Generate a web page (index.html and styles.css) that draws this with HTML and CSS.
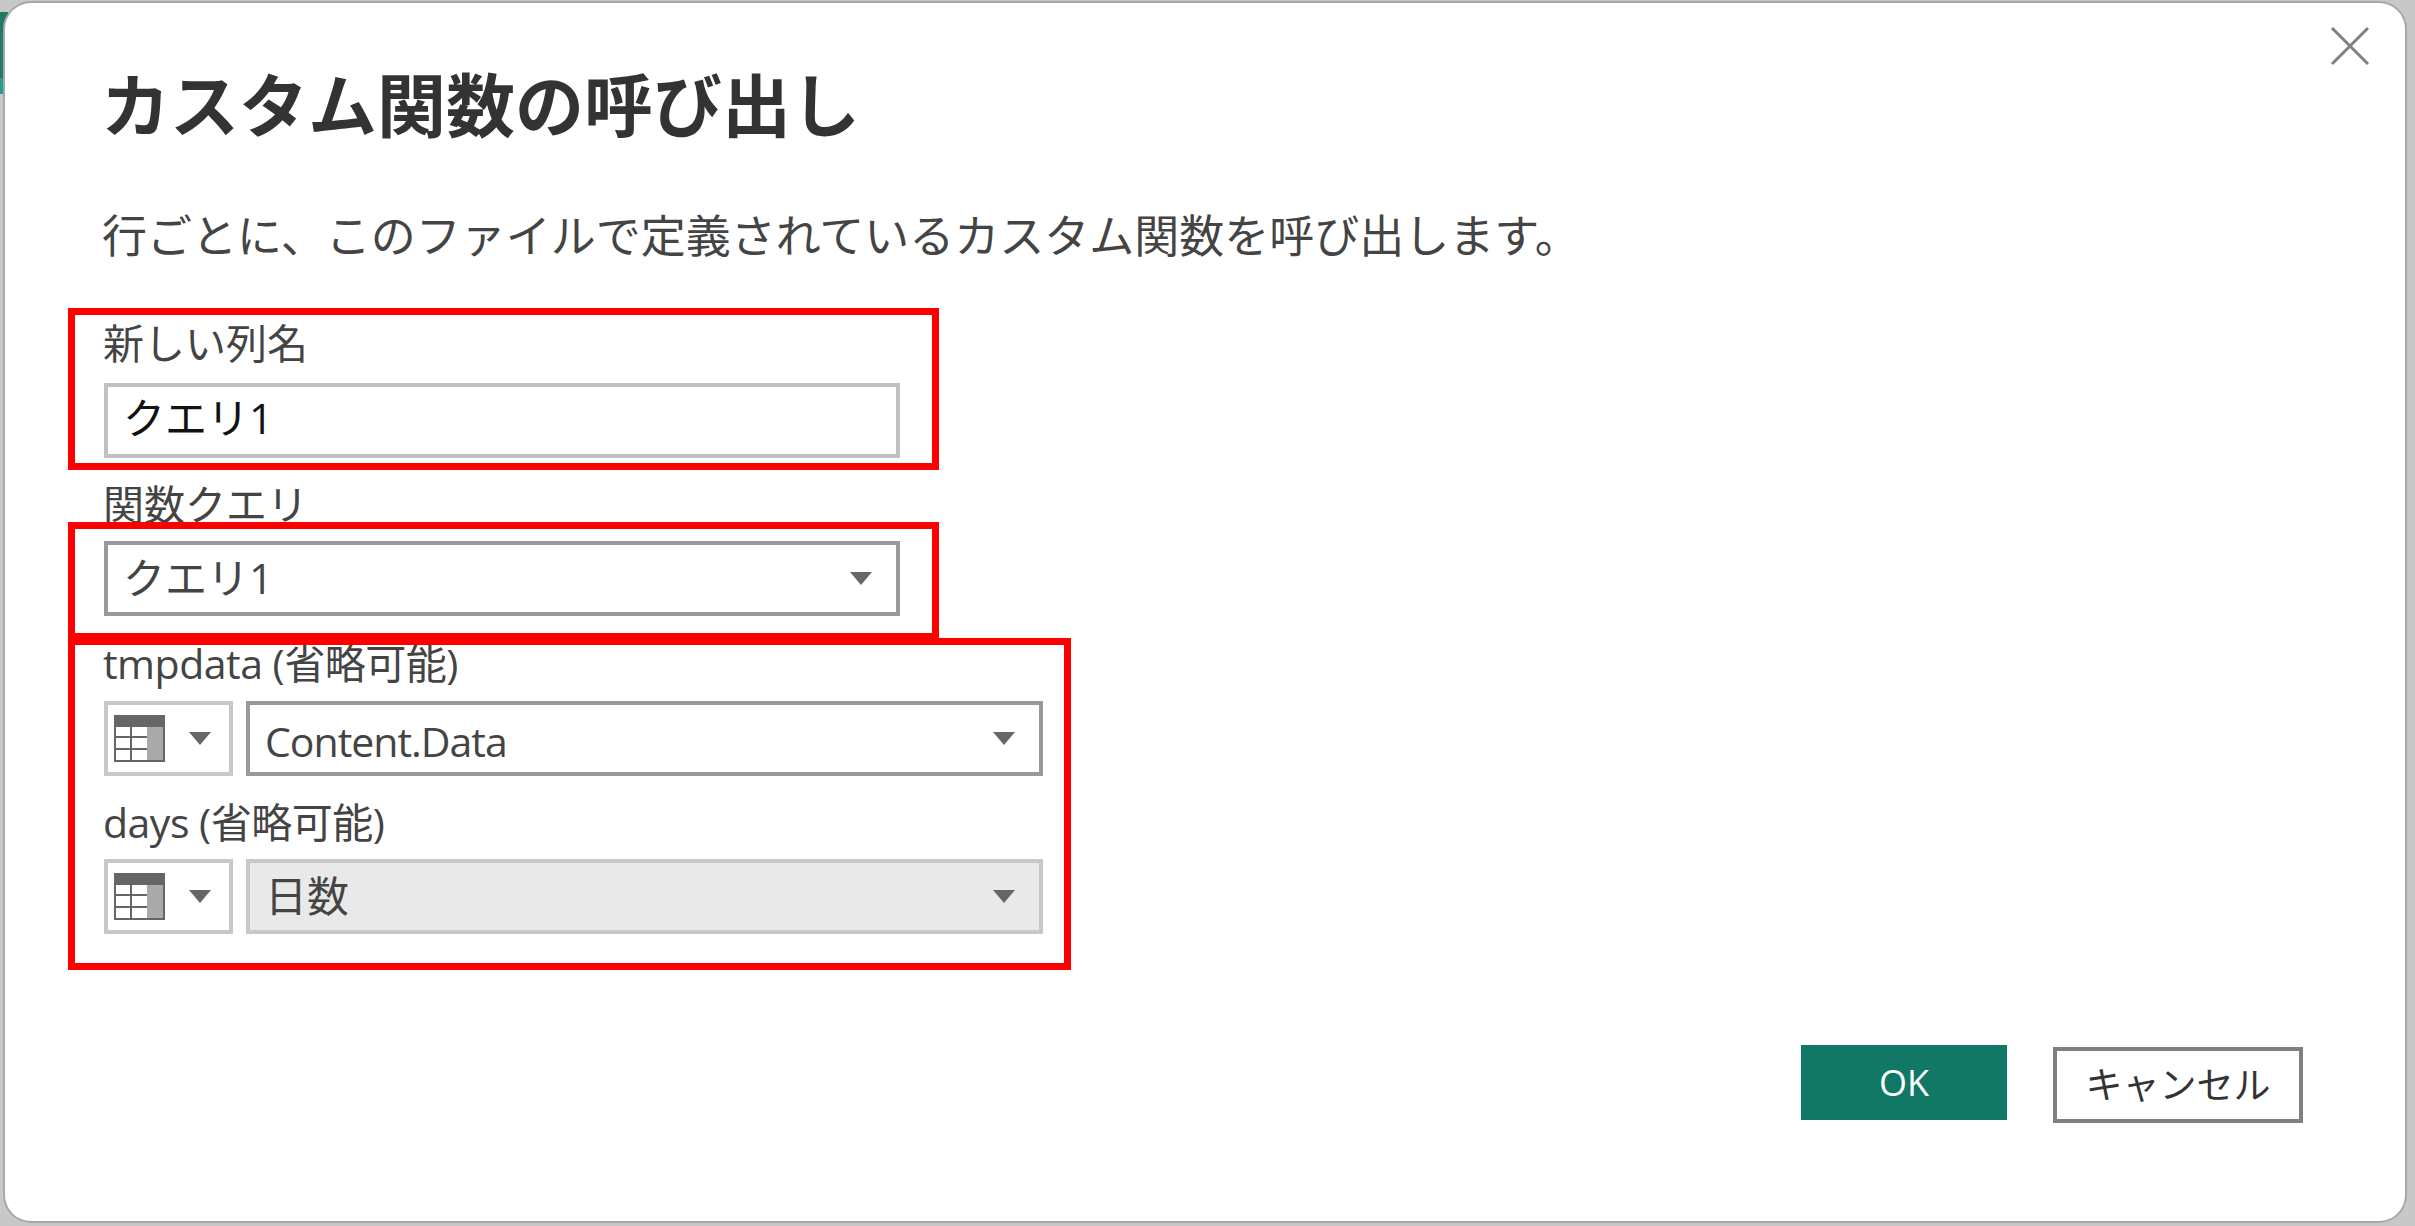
FILE: index.html
```html
<!DOCTYPE html>
<html lang="ja">
<head>
<meta charset="UTF-8">
<meta name="viewport" content="width=device-width, initial-scale=1.0">
<title>カスタム関数の呼び出し</title>
<link rel="stylesheet" href="styles.css">
</head>
<body>

<div class="app-strip"></div>

<div class="dialog">
  <svg class="close-icon" viewBox="0 0 40 40" width="40" height="40">
    <path d="M2 2 L38 38 M38 2 L2 38" stroke="#808080" stroke-width="3" fill="none"/>
  </svg>

  <h1 class="dialog-title">カスタム関数の呼び出し</h1>
  <div class="dialog-text">行ごとに、このファイルで定義されているカスタム関数を呼び出します。</div>

  <div class="field-label first">新しい列名</div>
  <div class="text-input">クエリ1</div>

  <div class="field-label second">関数クエリ</div>
  <div class="select wide">
    <span class="select-text raised">クエリ1</span>
    <span class="arrow"></span>
  </div>

  <div class="field-label third">tmpdata (省略可能)</div>
  <div class="param-row">
    <div class="type-btn">
      <svg class="table-icon" viewBox="0 0 51 47" width="51" height="47">
        <rect width="51" height="47" fill="#666"/>
        <rect x="33" y="12" width="16" height="33" fill="#aaa"/>
        <path d="M2 12h14v9H2zM18 12h15v9H18zM2 23h14v10H2zM18 23h15v10H18zM2 35h14v10H2zM18 35h15v10H18z" fill="#fff"/>
      </svg>
      <span class="arrow"></span>
    </div>
    <div class="select param">
      <span class="select-text latin">Content.Data</span>
      <span class="arrow"></span>
    </div>
  </div>

  <div class="field-label fourth">days (省略可能)</div>
  <div class="param-row">
    <div class="type-btn">
      <svg class="table-icon" viewBox="0 0 51 47" width="51" height="47">
        <rect width="51" height="47" fill="#666"/>
        <rect x="33" y="12" width="16" height="33" fill="#aaa"/>
        <path d="M2 12h14v9H2zM18 12h15v9H18zM2 23h14v10H2zM18 23h15v10H18zM2 35h14v10H2zM18 35h15v10H18z" fill="#fff"/>
      </svg>
      <span class="arrow"></span>
    </div>
    <div class="select param disabled">
      <span class="select-text raised">日数</span>
      <span class="arrow"></span>
    </div>
  </div>

  <div class="dialog-buttons">
    <button class="btn btn-ok">OK</button>
    <button class="btn btn-cancel">キャンセル</button>
  </div>

  <!-- red annotations drawn over the form -->
  <div class="mark mark-name"></div>
  <div class="mark mark-query"></div>
  <div class="mark mark-params"></div>
</div>

</body>
</html>
```

FILE: styles.css
```css
html, body {
  height: 100%;
}

body {
  margin: 0;
  padding: 3px 10px 5px 5px;
  box-sizing: border-box;
  background-color: #c8c8c8;
  font-family: "Open Sans", "Noto Sans CJK JP", sans-serif;
  overflow: hidden;
}

.app-strip {
  position: absolute;
  left: 0;
  top: 12px;
  width: 8px;
  height: 82px;
  background: linear-gradient(#217a66 0, #217a66 80%, #2a9d8a 80%);
}

.dialog {
  position: relative;
  height: 100%;
  box-sizing: border-box;
  padding: 62px 102px 98px 99px;
  display: flex;
  flex-direction: column;
  background-color: #fff;
  border-radius: 26px;
  box-shadow: 0 0 0 2px #a8a8a8;
}

.close-icon {
  position: absolute;
  top: 23px;
  right: 35px;
}

.dialog-title {
  margin: 0 0 0 -3px;
  font-size: 69px;
  line-height: 80px;
  font-weight: 700;
  color: #333;
  white-space: nowrap;
}

.dialog-text {
  margin: 61px 0 0 -2px;
  font-size: 45px;
  line-height: 60px;
  color: #444;
  white-space: nowrap;
}

.field-label {
  margin-left: -1px;
  font-size: 41px;
  line-height: 50px;
  color: #444;
  white-space: nowrap;
}

.field-label.first { margin-top: 52px; margin-bottom: 15px; }
.field-label.second { margin-top: 21px; margin-bottom: 12px; }
.field-label.third { margin-top: 22px; margin-bottom: 13px; letter-spacing: -0.5px; }
.field-label.fourth { margin-top: 21px; margin-bottom: 12px; letter-spacing: -0.5px; }

.text-input {
  width: 796px;
  height: 75px;
  box-sizing: border-box;
  padding-left: 15px;
  border: 4px solid #c0c0c0;
  font-size: 42px;
  line-height: 61px;
  color: #111;
}

.select {
  height: 75px;
  box-sizing: border-box;
  padding: 0 24px 0 15px;
  border: 4px solid #999;
  display: flex;
  align-items: center;
  justify-content: space-between;
  font-size: 42px;
  color: #444;
}

.select.wide {
  width: 796px;
}

.select.param {
  width: 797px;
}

.select.disabled {
  background-color: #e9e9e9;
  border-color: #c8c8c8;
}

.select-text.raised {
  margin-bottom: 7px;
}

.select-text.latin {
  margin-top: 5px;
  font-size: 41px;
  letter-spacing: -1px;
}

.param-row {
  display: flex;
  gap: 13px;
}

.type-btn {
  width: 129px;
  height: 75px;
  box-sizing: border-box;
  padding: 0 18px 0 6px;
  border: 4px solid #c8c8c8;
  display: flex;
  align-items: center;
  justify-content: space-between;
}

.arrow {
  width: 0;
  height: 0;
  border-left: 11px solid transparent;
  border-right: 11px solid transparent;
  border-top: 13px solid #666;
}

.dialog-buttons {
  margin-top: auto;
  display: flex;
  justify-content: flex-end;
  align-items: flex-end;
  gap: 46px;
}

.btn {
  height: 75px;
  box-sizing: border-box;
  font-family: inherit;
  font-size: 36px;
  padding: 0;
}

.btn-ok {
  width: 206px;
  margin-bottom: 3px;
  border: none;
  background-color: #117865;
  color: #fff;
}

.btn-cancel {
  width: 250px;
  height: 76px;
  padding-bottom: 5px;
  border: 4px solid #808080;
  background-color: #fff;
  font-size: 37px;
  color: #333;
}

.mark {
  position: absolute;
  border: 7px solid #f00;
  box-sizing: border-box;
}

.mark-name {
  left: 63px;
  top: 305px;
  width: 871px;
  height: 162px;
}

.mark-query {
  left: 63px;
  top: 519px;
  width: 871px;
  height: 118px;
}

.mark-params {
  left: 63px;
  top: 635px;
  width: 1003px;
  height: 332px;
}
```
